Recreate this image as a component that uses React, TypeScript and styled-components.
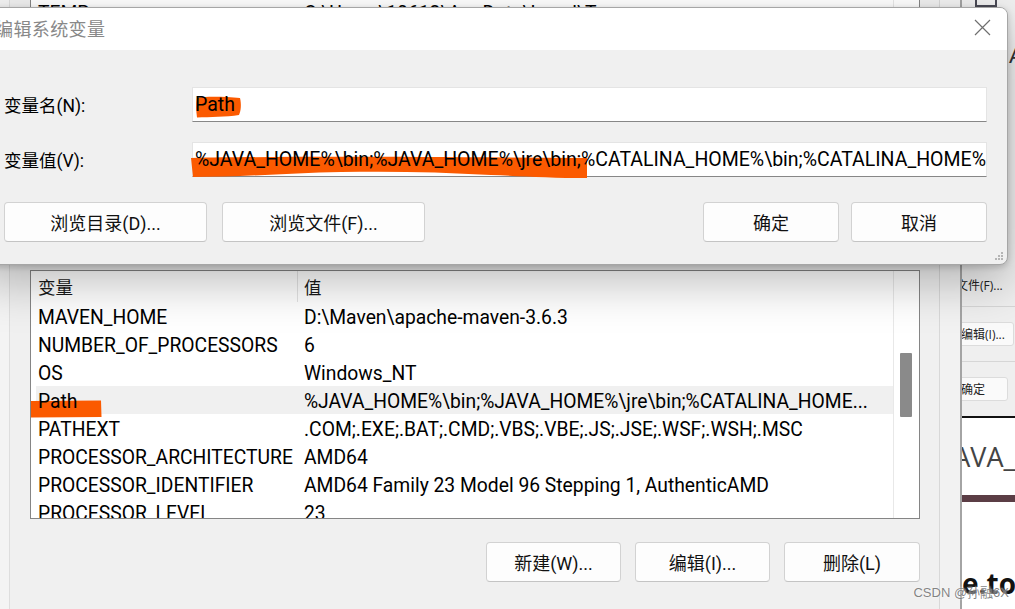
import React from "react";
import styled, { createGlobalStyle } from "styled-components";

const UI_FONT = `"Open Sans", "Noto Sans CJK SC", sans-serif`;
const TEXT_FONT = `Roboto, "Noto Sans CJK SC", sans-serif`;

const GlobalStyle = createGlobalStyle`
  html, body { margin: 0; padding: 0; }
  body { background: #f0f0f0; font-family: ${UI_FONT}; overflow: hidden; color: #000; }
  * { box-sizing: border-box; }
`;

const Desktop = styled.div`
  position: relative;
  width: 1015px;
  height: 609px;
  overflow: hidden;
  display: grid;
  grid-template-columns: 10px 930px 20px 55px;
  background: #f3f3f3;
`;

const DesktopEdge = styled.div`
  background: #f4f4f4;
  border-right: 1px solid #dedede;
`;

const EnvWindow = styled.div`
  background: #f0f0f0;
  display: grid;
  grid-template-rows: 265px 1fr;
  border-right: 1px solid #d8d8d8;
  min-width: 0;
`;

const TopArea = styled.div`
  padding: 0 19px 0 20px;
  overflow: hidden;
`;

const SysArea = styled.div`
  padding: 5px 19px 0 20px;
  display: flex;
  flex-direction: column;
`;

const ListBox = styled.div<{ $h: number; $mt?: number }>`
  position: relative;
  height: ${(p) => p.$h}px;
  margin-top: ${(p) => p.$mt ?? 0}px;
  border: 1px solid #858585;
  background: #fff;
  display: grid;
  grid-template-columns: 1fr 26px;
  overflow: hidden;
`;

const ListContent = styled.div`
  padding-left: 5px;
  display: flex;
  flex-direction: column;
  min-width: 0;
`;

const HeaderRow = styled.div`
  display: grid;
  grid-template-columns: 262px 1fr;
  height: 31px;
  flex: none;
`;

const HeaderCell = styled.div<{ $divider?: boolean }>`
  display: flex;
  align-items: center;
  padding-left: ${(p) => (p.$divider ? 2 : 6)}px;
  border-right: ${(p) => (p.$divider ? "1px solid #e3e3e3" : "none")};
  font-family: "Noto Sans CJK SC", sans-serif;
  font-size: 17.5px;
  color: #1a1a1a;
`;

const Row = styled.div<{ $selected?: boolean }>`
  display: grid;
  grid-template-columns: 262px 1fr;
  height: 28px;
  flex: none;
  background: ${(p) => (p.$selected ? "#f0f0f0" : "transparent")};
`;

const Cell = styled.div<{ $first?: boolean }>`
  position: relative;
  z-index: 2;
  display: flex;
  align-items: center;
  padding-left: ${(p) => (p.$first ? 2 : 6)}px;
  padding-top: 3px;
  white-space: nowrap;
  overflow: hidden;
  line-height: 1;
  font-family: ${TEXT_FONT};
  font-size: 19.3px;
  color: #000;
`;

const ScrollCol = styled.div`
  position: relative;
  border-left: 1px solid #e8e8e8;
  background: #fff;
`;

const ScrollThumb = styled.div`
  position: absolute;
  left: 6px;
  top: 82px;
  width: 12px;
  height: 64px;
  background: #8a8a8a;
  border-radius: 1px;
`;

const ListMark = styled.svg`
  position: absolute;
  left: -1px;
  top: 129px;
  z-index: 1;
`;

const ButtonBar = styled.div`
  display: flex;
  justify-content: flex-end;
  gap: 14px;
  margin-top: 23px;
`;

const WinButton = styled.button<{ $w: number }>`
  width: ${(p) => p.$w}px;
  height: 40px;
  background: #fdfdfd;
  border: 1px solid #d2d2d2;
  border-bottom-color: #c4c4c4;
  border-radius: 4px;
  font-family: ${TEXT_FONT};
  font-size: 18px;
  color: #111;
  padding: 0;
  display: flex;
  align-items: center;
  justify-content: center;
`;

const Gutter = styled.div`
  background: #f2f2f2;
`;

/* ---------- side panel (another window on the desktop) ---------- */

const SidePanel = styled.div`
  position: relative;
  display: flex;
  flex-direction: column;
  border-left: 2px solid #a4a4a4;
  overflow: hidden;
  box-shadow: inset 5px 0 6px -4px rgba(0, 0, 0, 0.25);
`;

const SideTop = styled.div`
  height: 265px;
  flex: none;
  background: #f0f0f0;
  padding-left: 13px;
`;

const CtrlBox = styled.div`
  width: 22px;
  height: 17px;
  margin-top: -10px;
  border: 2px solid #4a4a55;
`;

const BigA = styled.div`
  margin-top: 36px;
  margin-left: 34px;
  font-family: "Liberation Sans", sans-serif;
  font-size: 22px;
  color: #333;
`;

const SideSection = styled.div<{ $h: number; $bg?: string; $line?: string }>`
  height: ${(p) => p.$h}px;
  flex: none;
  background: ${(p) => p.$bg ?? "#efefef"};
  border-bottom: ${(p) => p.$line ?? "1px solid #d6d6d6"};
  display: flex;
  align-items: center;
  white-space: nowrap;
  overflow: hidden;
`;

const SideText = styled.span<{ $size: number; $weight?: number; $color?: string; $ml?: number }>`
  font-size: ${(p) => p.$size}px;
  font-weight: ${(p) => p.$weight ?? 400};
  color: ${(p) => p.$color ?? "#222"};
  margin-left: ${(p) => p.$ml ?? 0}px;
  line-height: 1;
`;

const SideBtn = styled.div<{ $w: number }>`
  width: ${(p) => p.$w}px;
  height: 24px;
  margin-left: -8px;
  background: #fafafa;
  border: 1px solid #dcdcdc;
  border-radius: 3px;
  display: flex;
  align-items: center;
  padding-left: 6px;
  font-size: 12px;
  color: #222;
`;

const SideFoot = styled.div`
  flex: 1;
  background: #fff;
  display: flex;
  align-items: flex-end;
  padding-bottom: 12px;
`;

/* ---------- dialog ---------- */

const Dialog = styled.div`
  position: absolute;
  z-index: 10;
  top: 7px;
  left: -22px;
  width: 1030px;
  height: 258px;
  border: 1px solid #a6a6a6;
  border-radius: 8px;
  background: #f0f0f0;
  overflow: hidden;
  box-shadow: 0 18px 48px rgba(0, 0, 0, 0.26), 0 2px 6px rgba(0, 0, 0, 0.18);
  display: flex;
  flex-direction: column;
`;

const TitleBar = styled.div`
  height: 42px;
  flex: none;
  background: #fff;
  display: flex;
  align-items: center;
  padding-left: 16px;
  padding-bottom: 3px;
`;

const Title = styled.div`
  flex: 1;
  font-family: "Noto Sans CJK SC", sans-serif;
  font-size: 18px;
  color: #888;
  letter-spacing: 0.4px;
`;

const CloseBtn = styled.div`
  width: 48px;
  height: 36px;
  margin-right: 1px;
  display: flex;
  align-items: center;
  justify-content: center;
`;

const DialogBody = styled.div`
  flex: 1;
  padding: 37px 20px 0 25px;
  display: flex;
  flex-direction: column;
`;

const FieldRow = styled.div`
  display: flex;
  align-items: center;
  height: 35px;
  margin-bottom: 20px;
`;

const FieldLabel = styled.div`
  width: 188px;
  flex: none;
  font-family: ${TEXT_FONT};
  font-size: 17.5px;
  color: #000;
`;

const Field = styled.div`
  position: relative;
  z-index: 0;
  flex: 1;
  height: 35px;
  min-width: 0;
  background: #fff;
  border: 1px solid #e4e4e4;
  border-bottom: 1px solid #878787;
`;

const FieldText = styled.div`
  position: relative;
  z-index: 1;
  height: 100%;
  padding-left: 2px;
  display: flex;
  align-items: center;
  white-space: nowrap;
  overflow: hidden;
  font-family: ${TEXT_FONT};
  font-size: 19.5px;
  line-height: 1;
  color: #000;
`;

const FieldMark = styled.svg<{ $l: number; $t: number }>`
  position: absolute;
  z-index: 0;
  left: ${(p) => p.$l}px;
  top: ${(p) => p.$t}px;
`;

const DialogButtons = styled.div`
  display: flex;
  gap: 15px;
  margin-top: 5px;
`;

const Spacer = styled.div`
  flex: 1;
`;

const RightPair = styled.div`
  display: flex;
  gap: 12px;
`;

const Grip = styled.svg`
  position: absolute;
  right: 3px;
  bottom: 3px;
`;

const Watermark = styled.div`
  position: absolute;
  z-index: 20;
  right: 6px;
  bottom: 8px;
  font-family: "Liberation Sans", "Noto Sans CJK SC", sans-serif;
  font-size: 13px;
  color: rgba(110, 110, 110, 0.85);
  text-shadow: 0 0 2px rgba(255, 255, 255, 0.9);
`;

const ORANGE = "#fb5a00";

const rows: [string, string][] = [
  ["MAVEN_HOME", "D:\\Maven\\apache-maven-3.6.3"],
  ["NUMBER_OF_PROCESSORS", "6"],
  ["OS", "Windows_NT"],
  ["Path", "%JAVA_HOME%\\bin;%JAVA_HOME%\\jre\\bin;%CATALINA_HOME..."],
  ["PATHEXT", ".COM;.EXE;.BAT;.CMD;.VBS;.VBE;.JS;.JSE;.WSF;.WSH;.MSC"],
  ["PROCESSOR_ARCHITECTURE", "AMD64"],
  ["PROCESSOR_IDENTIFIER", "AMD64 Family 23 Model 96 Stepping 1, AuthenticAMD"],
  ["PROCESSOR_LEVEL", "23"],
];

export default function App() {
  return (
    <>
      <GlobalStyle />
      <Desktop>
        <DesktopEdge />
        <EnvWindow>
          <TopArea>
            <ListBox $h={230} $mt={-3}>
              <ListContent>
                <Row>
                  <Cell $first>TEMP</Cell>
                  <Cell>C:\Users\10612\AppData\Local\Temp</Cell>
                </Row>
                <Row>
                  <Cell $first>TMP</Cell>
                  <Cell>C:\Users\10612\AppData\Local\Temp</Cell>
                </Row>
              </ListContent>
              <ScrollCol />
            </ListBox>
          </TopArea>
          <SysArea>
            <ListBox $h={249}>
              <ListMark width="73" height="18" viewBox="0 0 73 18">
                <path d="M0 1 L71 0.5 L71.5 17 L1 17.5 Z" fill={ORANGE} />
              </ListMark>
              <ListContent>
                <HeaderRow>
                  <HeaderCell $divider>变量</HeaderCell>
                  <HeaderCell>值</HeaderCell>
                </HeaderRow>
                {rows.map(([k, v]) => (
                  <Row key={k} $selected={k === "Path"}>
                    <Cell $first>{k}</Cell>
                    <Cell>{v}</Cell>
                  </Row>
                ))}
              </ListContent>
              <ScrollCol>
                <ScrollThumb />
              </ScrollCol>
            </ListBox>
            <ButtonBar>
              <WinButton $w={135}>新建(W)...</WinButton>
              <WinButton $w={135}>编辑(I)...</WinButton>
              <WinButton $w={136}>删除(L)</WinButton>
            </ButtonBar>
          </SysArea>
        </EnvWindow>
        <Gutter />
        <SidePanel>
          <SideTop>
            <CtrlBox />
            <BigA>A</BigA>
          </SideTop>
          <SideSection $h={42}>
            <SideText $size={12} $ml={-6}>文件(F)...</SideText>
          </SideSection>
          <SideSection $h={55}>
            <SideBtn $w={60}>编辑(I)...</SideBtn>
          </SideSection>
          <SideSection $h={56} $line="2px solid #111">
            <SideBtn $w={54}>确定</SideBtn>
          </SideSection>
          <SideSection $h={84} $bg="#fff" $line="7px solid #5b3d45">
            <SideText $size={27} $color="#444" $ml={-16}>JAVA_</SideText>
          </SideSection>
          <SideFoot>
            <SideText $size={28} $weight={700} $color="#111" $ml={0}>e.to</SideText>
          </SideFoot>
        </SidePanel>

        <Dialog>
          <TitleBar>
            <Title>编辑系统变量</Title>
            <CloseBtn>
              <svg width="17" height="17" viewBox="0 0 17 17">
                <path d="M1 1 L16 16 M16 1 L1 16" stroke="#6f6f6f" strokeWidth="1.2" />
              </svg>
            </CloseBtn>
          </TitleBar>
          <DialogBody>
            <FieldRow>
              <FieldLabel>变量名(N):</FieldLabel>
              <Field>
                <FieldMark $l={3} $t={8} width="46" height="22" viewBox="0 0 46 22">
                  <path d="M1 2 C12 0 30 1 44 2 C45.5 8 45 15 43 19 C30 21 14 21 1 21.5 C0 15 0 8 1 2 Z" fill={ORANGE} />
                </FieldMark>
                <FieldText>Path</FieldText>
              </Field>
            </FieldRow>
            <FieldRow>
              <FieldLabel>变量值(V):</FieldLabel>
              <Field>
                <FieldMark $l={-2} $t={12} width="398" height="24" viewBox="0 0 398 24">
                  <path
                    d="M0 3 C90 1 250 2 396 3 L396 23 C360 23 330 21 300 20 C250 17 200 16 150 17 C100 18 50 22 2 22 Z"
                    fill={ORANGE}
                  />
                </FieldMark>
                <FieldText>%JAVA_HOME%\bin;%JAVA_HOME%\jre\bin;%CATALINA_HOME%\bin;%CATALINA_HOME%\lib</FieldText>
              </Field>
            </FieldRow>
            <DialogButtons>
              <WinButton $w={203}>浏览目录(D)...</WinButton>
              <WinButton $w={203}>浏览文件(F)...</WinButton>
              <Spacer />
              <RightPair>
                <WinButton $w={136}>确定</WinButton>
                <WinButton $w={136}>取消</WinButton>
              </RightPair>
            </DialogButtons>
          </DialogBody>
          <Grip width="10" height="10" viewBox="0 0 10 10">
            <rect x="7" y="1" width="2" height="2" fill="#b5b5b5" />
            <rect x="4" y="4" width="2" height="2" fill="#b5b5b5" />
            <rect x="7" y="4" width="2" height="2" fill="#b5b5b5" />
            <rect x="1" y="7" width="2" height="2" fill="#b5b5b5" />
            <rect x="4" y="7" width="2" height="2" fill="#b5b5b5" />
            <rect x="7" y="7" width="2" height="2" fill="#b5b5b5" />
          </Grip>
        </Dialog>
        <Watermark>CSDN @孙融6X</Watermark>
      </Desktop>
    </>
  );
}
